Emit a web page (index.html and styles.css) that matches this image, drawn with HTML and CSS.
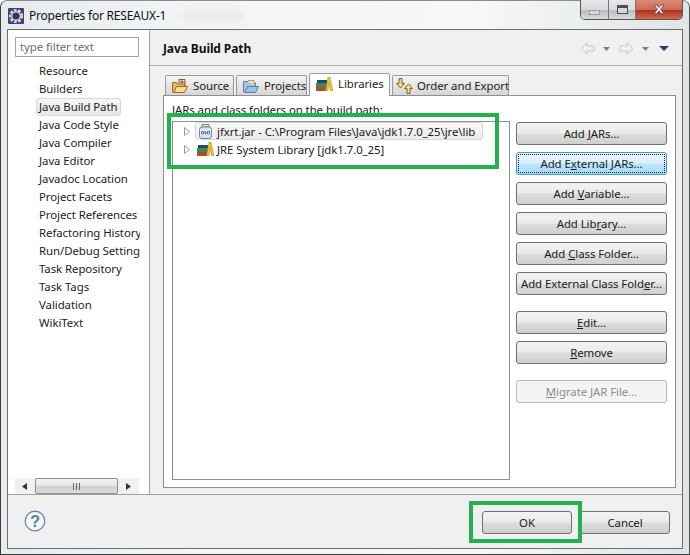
FILE: index.html
```html
<!DOCTYPE html>
<html lang="en">
<head>
<meta charset="utf-8">
<title>Properties for RESEAUX-1</title>
<link rel="stylesheet" href="styles.css">
</head>
<body>
<div class="window">
  <header class="titlebar">
    <svg class="app-icon" width="16" height="16" viewBox="0 0 16 16"><rect width="16" height="16" rx="1" fill="#4a3a80"/><circle cx="8" cy="8" r="5.800" fill="none" stroke="#d8d8dc" stroke-width="2.600" stroke-dasharray="2.600 1.500"/><circle cx="8" cy="8" r="4.300" fill="#3a3a44" stroke="#cfcfd6" stroke-width="1.400"/></svg>
    <span class="title">Properties for RESEAUX-1</span>
    <span class="title-blur"></span>
    <div class="controls">
      <span class="ctl ctl-min"><i></i></span>
      <span class="ctl ctl-max"><i></i></span>
      <span class="ctl ctl-close"><svg width="14" height="11" viewBox="0 0 14 11"><path d="M2 1h2.800L7 3.500 9.200 1H12L8.700 5.200 12 9.800H9.200L7 7 4.800 9.800H2l3.300-4.600z" fill="#f4f4f4" stroke="#5c3a36" stroke-width=".8"/></svg></span>
    </div>
  </header>
  <div class="client">
    <div class="main">
      <aside class="nav">
        <div class="filter">type filter text</div>
        <ul class="tree">
          <li>Resource</li>
          <li>Builders</li>
          <li class="sel"><span>Java Build Path</span></li>
          <li>Java Code Style</li>
          <li>Java Compiler</li>
          <li>Java Editor</li>
          <li>Javadoc Location</li>
          <li>Project Facets</li>
          <li>Project References</li>
          <li>Refactoring History</li>
          <li>Run/Debug Settings</li>
          <li>Task Repository</li>
          <li>Task Tags</li>
          <li>Validation</li>
          <li>WikiText</li>
        </ul>
        <div class="hscroll">
          <svg width="5" height="7" viewBox="0 0 5 7"><path d="M5 0v7L0 3.500z" fill="#333"/></svg>
          <div class="thumb"><i></i><i></i><i></i></div>
          <svg width="5" height="7" viewBox="0 0 5 7"><path d="M0 0v7l5-3.500z" fill="#333"/></svg>
        </div>
      </aside>
      <section class="page">
        <div class="page-head">
          <h1>Java Build Path</h1>
          <div class="history">
            <svg width="15" height="13" viewBox="0 0 15 13"><path d="M7 1v3h7v5H7v3L1 6.500z" fill="#f2f2ea" stroke="#c6c8be"/></svg>
            <svg class="drop" width="7" height="4" viewBox="0 0 7 4"><path d="M0 0h7L3.500 4z" fill="#808080"/></svg>
            <svg class="fwd" width="15" height="13" viewBox="0 0 15 13"><path d="M8 1v3H1v5h7v3l6-5.500z" fill="#f2f2ea" stroke="#c6c8be"/></svg>
            <svg class="drop" width="7" height="4" viewBox="0 0 7 4"><path d="M0 0h7L3.500 4z" fill="#808080"/></svg>
            <svg class="menu" width="10" height="5" viewBox="0 0 10 5"><path d="M0 0h10L5 5z" fill="#34346e"/></svg>
          </div>
        </div>
        <div class="page-body">
          <div class="tabs">
            <div class="tab tab-source"><svg width="16" height="14" viewBox="0 0 16 14"><path d="M.5 3.500h4l1 1.500h7v8H.5z" fill="#e6b860" stroke="#a06a20"/><path d="M2 13.500l2.500-6h11l-3 6z" fill="#f8dc90" stroke="#a06a20"/><path d="M7 4V.5h6V7M10 .5V5M7 3h6" fill="none" stroke="#8a5a20"/></svg><span>Source</span></div>
            <div class="tab tab-projects"><svg width="16" height="14" viewBox="0 0 16 14"><path d="M.5 2.500h5l1 1.500h6v9H.5z" fill="#a8c4e8" stroke="#5a7ca8"/><path d="M2 13.500l2.500-6h11l-3 6z" fill="#9cc0e8" stroke="#5a7ca8"/><path d="M5 3.500V1.500h6v4" fill="#f4e8b4" stroke="#b8a468"/></svg><span>Projects</span></div>
            <div class="tab tab-lib active"><svg width="17" height="14" viewBox="0 0 17 14"><rect x="1" y="3" width="10" height="3" fill="#26466e"/><rect x="0" y="6" width="11" height="4" fill="#3a8a58"/><rect x="0" y="10" width="12" height="4" fill="#a8502c"/><path d="M9.500 14l2.500-14h2l3 14h-2.500L13 6l-1 8z" fill="#ecbc3c" stroke="#b88a20" stroke-width=".5"/></svg><span>Libraries</span></div>
            <div class="tab tab-order"><svg width="17" height="16" viewBox="0 0 17 16"><path d="M3 .5h3v5h2.500L4.500 10 .5 5.500H3z" fill="#f4dc98" stroke="#806018"/><path d="M11 15.500h3v-5h2.500l-4-4.500-4 4.500H11z" fill="#f4dc98" stroke="#806018"/></svg><span>Order and Export</span></div>
          </div>
          <div class="tab-content">
            <div class="caption">JARs and class folders on the build path:</div>
            <div class="split">
              <div class="list">
                <div class="row">
                  <svg class="twist" width="6" height="9" viewBox="0 0 6 9"><path d="M.5.500v8l5-4z" fill="#fff" stroke="#9a9a9a"/></svg>
                  <div class="row-sel">
                    <svg width="13" height="15" viewBox="0 0 13 15"><path d="M3 .5h7v2.500H3z" fill="#f0e0b8" stroke="#908878"/><rect x=".5" y="3" width="12" height="11.500" rx="2.500" fill="#d8e4f4" stroke="#7088a8"/><rect x="1.500" y="6.500" width="10" height="4.500" fill="#fff"/><path d="M2.500 7.500h2v2.500h-2zM6 7.500h1v2.500H6zM8.500 7.500h2v2.500h-2z" fill="none" stroke="#2c4c80" stroke-width=".8"/></svg>
                    <span>jfxrt.jar - C:\Program Files\Java\jdk1.7.0_25\jre\lib</span>
                  </div>
                </div>
                <div class="row">
                  <svg class="twist" width="6" height="9" viewBox="0 0 6 9"><path d="M.5.500v8l5-4z" fill="#fff" stroke="#9a9a9a"/></svg>
                  <div class="row-plain">
                    <svg width="17" height="14" viewBox="0 0 17 14"><rect x="1" y="3" width="10" height="3" fill="#26466e"/><rect x="0" y="6" width="11" height="4" fill="#3a8a58"/><rect x="0" y="10" width="12" height="4" fill="#a8502c"/><path d="M9.500 14l2.500-14h2l3 14h-2.500L13 6l-1 8z" fill="#ecbc3c" stroke="#b88a20" stroke-width=".5"/></svg>
                    <span>JRE System Library [jdk1.7.0_25]</span>
                  </div>
                </div>
              </div>
              <div class="buttons">
                <button class="btn">Add <u>J</u>ARs...</button>
                <button class="btn focus"><span class="focus-ring">Add E<u>x</u>ternal JARs...</span></button>
                <button class="btn">Add <u>V</u>ariable...</button>
                <button class="btn">Add Lib<u>r</u>ary...</button>
                <button class="btn">Add <u>C</u>lass Folder...</button>
                <button class="btn">Add External Class Fold<u>e</u>r...</button>
                <button class="btn gap"><u>E</u>dit...</button>
                <button class="btn"><u>R</u>emove</button>
                <button class="btn gap disabled"><u>M</u>igrate JAR File...</button>
              </div>
            </div>
          </div>
        </div>
      </section>
    </div>
    <footer class="footer">
      <svg class="help" width="22" height="22" viewBox="0 0 22 22"><circle cx="11" cy="11" r="9.800" fill="#f4f6fa" stroke="#5f7aa2" stroke-width="1.200"/><text x="11" y="16.500" text-anchor="middle" class="help-q">?</text></svg>
      <div class="actions">
        <button class="btn ok">OK</button>
        <button class="btn cancel">Cancel</button>
      </div>
    </footer>
  </div>
  <div class="mark mark-list"></div>
  <div class="mark mark-ok"></div>
</div>
</body>
</html>
```
FILE: styles.css
```css
* { box-sizing: border-box; }
html, body { margin: 0; padding: 0; }
body { width: 690px; height: 555px; overflow: hidden; font-family: "Noto Sans", "Open Sans", sans-serif; font-size: 11.4px; letter-spacing: -0.06px; color: #1a1a1a; }
.window { position: relative; width: 690px; height: 555px; display: flex; flex-direction: column; padding: 0 6px 5px 6px; border-radius: 7px 7px 0 0; background: linear-gradient(90deg, #e6ebee 0, #f4f6f7 30%, #f6f7f7 70%, #dfe4e7 100%); border: 1px solid #3c3c3c; border-top-color: #8d8d8d; border-right-color: #555; }
.titlebar { position: relative; height: 28px; flex: none; display: flex; align-items: center; padding-top: 1px; }
.app-icon { flex: none; margin-left: 1px; }
.title { margin-left: 5px; font-size: 12px; letter-spacing: -0.22px; color: #111; }
.title-blur { width: 60px; height: 8px; margin-left: 18px; background: #e2e4e6; filter: blur(5px); }
.controls { position: absolute; top: -1px; right: 0; display: flex; height: 20px; border: 1px solid #555; border-top: 0; border-radius: 0 0 5px 5px; overflow: hidden; }
.ctl { display: flex; align-items: center; justify-content: center; background: linear-gradient(#e6e8ea 0, #d8dadc 50%, #b8bbbe 52%, #d8dadc 100%); }
.ctl-min { width: 28px; border-right: 1px solid #777; }
.ctl-max { width: 27px; border-right: 1px solid #777; }
.ctl-close { width: 46px; background: linear-gradient(#dc8a78 0, #cc6a55 50%, #b03020 55%, #d06a50 100%); }
.ctl-min i { display: block; width: 11px; height: 5px; margin-top: 6px; border: 1px solid #9a9ea2; background: #d8dadc; }
.ctl-max i { display: block; width: 11px; height: 9px; border: 1px solid #4a4e54; box-shadow: inset 0 2px 0 #4a4e54; background: #d4d6d8; }
.client { flex: 1; min-height: 0; display: flex; flex-direction: column; background: #f0f0f0; border: 1px solid #6e6e6e; }
.main { flex: 1; min-height: 0; display: flex; border-bottom: 1px solid #a0a0a0; }
.nav { width: 142px; flex: none; background: #fff; border-right: 1px solid #a0a0a0; padding: 7px 9px 0 7px; display: flex; flex-direction: column; }
.filter { width: 124px; height: 20px; flex: none; border: 1px solid #a4a4a4; color: #6d6d6d; line-height: 17px; padding-left: 4px; }
.tree { flex: 1; list-style: none; margin: 5px 0 0; padding: 0 0 0 24px; white-space: nowrap; overflow: hidden; width: 125px; }
.tree li { height: 18px; line-height: 18px; color: #1c1c1c; }
.tree li.sel { margin-left: -3px; }
.tree li.sel span { display: inline-block; height: 18px; width: 85px; padding-left: 2px; border: 1px solid #d8d8d8; border-radius: 3px; line-height: 16px; background: linear-gradient(#f6f6f6, #e8e8e8); white-space: nowrap; }
.hscroll { width: 124px; height: 16px; flex: none; display: flex; align-items: center; background: #f0f0f0; padding: 0 8px 0 7px; justify-content: space-between; }
.thumb { width: 83px; height: 16px; border: 1px solid #8f8f8f; border-radius: 2px; background: linear-gradient(#f2f2f2 0, #e4e4e4 50%, #cfcfcf 52%, #dcdcdc 100%); display: flex; align-items: center; justify-content: center; gap: 2px; }
.thumb i { width: 1px; height: 7px; background: #666; }
.page { flex: 1; min-width: 0; display: flex; flex-direction: column; }
.page-head { height: 36px; flex: none; display: flex; align-items: center; justify-content: space-between; padding: 2px 13px 0 13px; border-bottom: 1px solid #b0b0b0; }
.page-head h1 { margin: 0; font-size: 12px; font-weight: 700; letter-spacing: -0.1px; color: #111; }
.history { display: flex; align-items: center; }
.history svg { flex: none; }
.history .drop { margin-left: 8px; }
.history .fwd { margin-left: 9px; }
.history .menu { margin-left: 10px; }
.page-body { flex: 1; min-height: 0; padding: 6px 6px 6px 13px; display: flex; flex-direction: column; }
.tabs { display: flex; height: 23px; flex: none; align-items: flex-end; padding-left: 2px; gap: 2px; position: relative; z-index: 1; }
.tab { height: 20px; display: flex; align-items: center; gap: 5px; padding-left: 6px; border: 1px solid #9a9a9a; border-bottom: 0; border-radius: 2px 2px 0 0; background: linear-gradient(#f4f4f4, #d6d6d6); color: #222; white-space: nowrap; }
.tab svg { flex: none; }
.tab-source { width: 69px; }
.tab-projects { width: 71px; }
.tab-lib { width: 81px; }
.tab-order { width: 117px; padding-left: 3px; gap: 4px; }
.tab.active { height: 23px; background: #fff; padding-bottom: 3px; margin-bottom: -1px; }
.tab-content { flex: 1; min-height: 0; background: #fff; border: 1px solid #8e8e8e; padding: 6px 8px 7px 8px; display: flex; flex-direction: column; }
.caption { height: 19px; line-height: 16px; flex: none; white-space: nowrap; }
.split { flex: 1; min-height: 0; display: flex; }
.list { width: 338px; flex: none; border: 1px solid #8e8e8e; }
.row { height: 18px; display: flex; align-items: center; padding-left: 11px; }
.twist { flex: none; margin-right: 6px; }
.row svg { flex: none; }
.row-sel, .row-plain { display: flex; align-items: center; white-space: nowrap; height: 18px; }
.row-sel { width: 288px; margin-left: -1px; padding-left: 3px; border: 1px solid #d8d8d8; border-radius: 3px; background: linear-gradient(#f8f8f8, #ececec); gap: 5px; }
.row-plain { gap: 3px; margin-left: 1px; }
.buttons { flex: 1; min-width: 0; display: flex; flex-direction: column; padding: 1px 0 0 6px; align-items: flex-start; gap: 7px; }
.btn { display: flex; align-items: center; justify-content: center; width: 151px; height: 23px; padding: 0; flex: none; font: inherit; letter-spacing: inherit; color: #1a1a1a; border: 1px solid #707070; border-radius: 3px; background: linear-gradient(#f2f2f2 0, #ebebeb 48%, #dddddd 52%, #cfcfcf 100%); white-space: pre; }
.btn.gap { margin-top: 9px; }
.btn.focus { border-color: #3c9fd0; background: linear-gradient(#eaf6fd 0, #d9f0fc 48%, #bee6fd 52%, #a7d9f5 100%); padding: 1px; }
.focus-ring { display: block; white-space: pre; width: 100%; height: 100%; line-height: 17px; border: 1px dotted #222; border-radius: 1px; }
.btn.disabled { color: #8d8d8d; border-color: #b8b8b8; background: #f4f4f4; }
.btn u { text-underline-offset: 1px; }
.footer { height: 53px; flex: none; display: flex; align-items: center; justify-content: space-between; padding: 1px 12px 0 15px; }
.help { margin: -3px 0 0 1px; }
.help-q { font-family: "Liberation Sans", sans-serif; font-size: 16px; font-weight: 700; fill: #5f7aa2; }
.actions { display: flex; gap: 8px; }
.btn.ok { width: 90px; }
.btn.cancel { width: 90px; }
.mark { position: absolute; border: 4.5px solid #22b14c; pointer-events: none; }
.mark-list { left: 166px; top: 112px; width: 332px; height: 56px; }
.mark-ok { left: 468px; top: 500px; width: 113px; height: 42px; }
```
